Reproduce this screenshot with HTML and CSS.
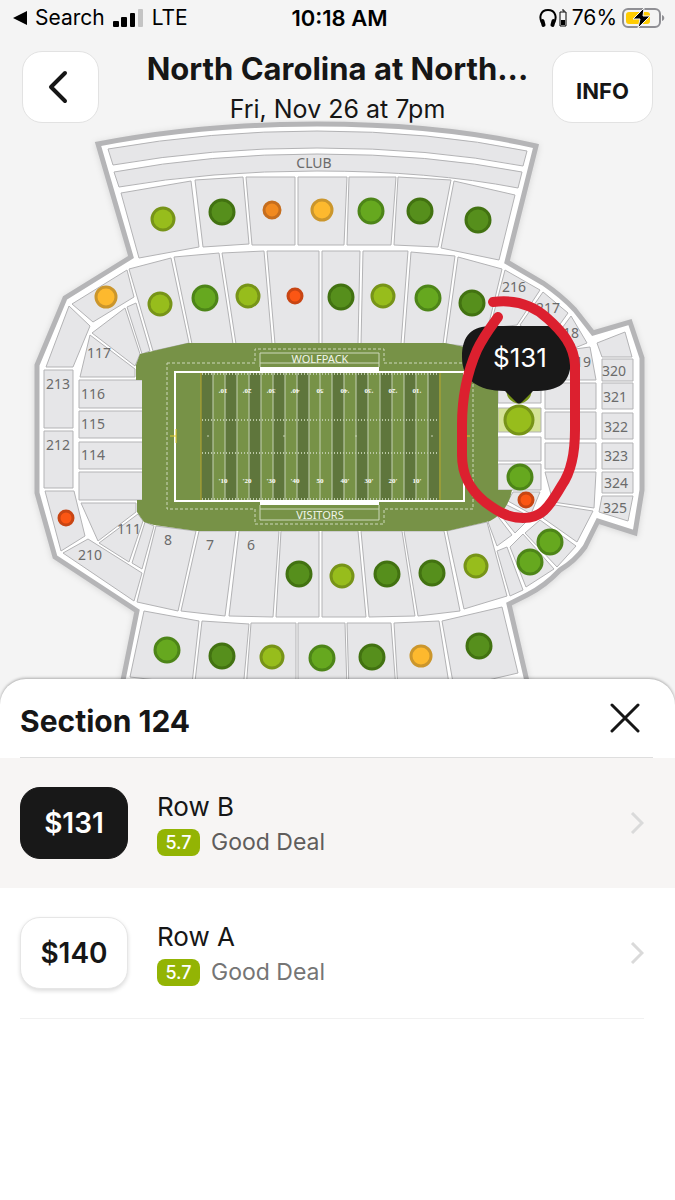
FILE: index.html
```html
<!DOCTYPE html>
<html lang="en">
<head>
    <meta charset="UTF-8">
    <meta name="viewport" content="width=device-width, initial-scale=1">
    <title>North Carolina at North Carolina State</title>
    <link rel="stylesheet" href="styles.css">
</head>
<body>
<div class="status-bar">
    <div class="status-left">
        <svg width="14" height="14" viewBox="0 0 14 14"><path d="M0 7 L14 0 V14 Z"/></svg>
        <span class="status-search">Search</span>
        <svg width="31" height="20" viewBox="0 0 31 20">
            <rect x="0" y="13" width="6" height="6" rx="1"/>
            <rect x="8" y="9" width="6" height="10" rx="1"/>
            <rect x="17" y="5" width="5" height="14" rx="1"/>
            <rect x="25" y="1" width="5" height="18" rx="1" fill="#c4c4c4"/>
        </svg>
        <span class="status-carrier">LTE</span>
    </div>
    <div class="status-time">10:18 AM</div>
    <div class="status-right">
        <svg width="28" height="20" viewBox="0 0 28 20">
            <path d="M3 15 C0 10 1 2 9 2 C17 2 18 10 15 15" fill="none" stroke="#000" stroke-width="2"/>
            <rect x="2" y="11" width="4" height="8" rx="2" transform="rotate(-15 4 15)"/>
            <rect x="12" y="11" width="4" height="8" rx="2" transform="rotate(15 14 15)"/>
            <path d="M21 4 H27 V18 H21 Z M23 2 H25 V4" fill="none" stroke="#000"/>
            <rect x="22" y="12" width="4" height="5"/>
        </svg>
        <span class="status-level">76%</span>
        <svg width="44" height="22" viewBox="0 0 44 22">
            <rect x="1" y="2" width="37" height="18" rx="5" fill="none" stroke="#8f8f94" stroke-width="2"/>
            <rect x="4" y="5" width="24" height="12" rx="3" fill="#ffcc02"/>
            <path d="M40 8 C43 9 43 13 40 14 Z" fill="#8f8f94"/>
            <path d="M22 1 L11 12 H18 L16 21 L28 9 H21 Z" fill="#000" stroke="#f4f4f4" stroke-width="1"/>
        </svg>
    </div>
</div>
<header class="header">
    <button class="nav-btn back-btn" type="button" aria-label="Back">
        <svg width="20" height="34" viewBox="0 0 20 34"><path d="M17 3 L3 17 L17 31" fill="none" stroke="#161616" stroke-width="4" stroke-linecap="round" stroke-linejoin="round"/></svg>
    </button>
    <div class="event">
        <h1>North Carolina at North...</h1>
        <p>Fri, Nov 26 at 7pm</p>
    </div>
    <button class="nav-btn info-btn" type="button">INFO</button>
</header>

<svg class="map" viewBox="0 120 675 580">
    <defs>
        <pattern id="stripes" x="201" y="372" width="24" height="130" patternUnits="userSpaceOnUse">
            <rect width="12" height="130" fill="#5f763c"/>
        </pattern>
    </defs>

    <!-- stadium outline -->
    <path class="outline" d="M98 144 Q200 124 317 124 Q440 124 536 146 L507 262 L543 283 Q562 296 575 310 L593 333 L630 322 L642 358 V490 L635 533 L598 521 L585 547 Q575 561 560 570 Q545 586 527 595 L509 604 L529 690 V710 H117 L137 611 L55 557 L37 493 V365 L65 298 L131 257 Z"/>

    <!-- club -->
    <g class="section">
        <path d="M108 149 Q210 131 317 131 Q430 131 527 151 L523 166 Q430 148 317 148 Q210 148 113 165 Z"/>
        <path d="M114 172 Q210 154 317 154 Q430 154 522 172 L518 188 Q430 171 317 171 Q210 171 119 187 Z"/>
    </g>

    <!-- upper rows, north side -->
    <g class="section">
        <path d="M121 193 L191 181 L199 247 L139 258 Z"/>
        <path d="M195 180 L243 177 L249 244 L203 247 Z"/>
        <path d="M246 177 H295 V245 H252 Z"/>
        <path d="M298 177 H347 L344 245 H298 Z"/>
        <path d="M349 177 H396 L391 245 H347 Z"/>
        <path d="M398 177 L451 180 L438 247 L394 245 Z"/>
        <path d="M454 181 L515 195 L499 260 L441 248 Z"/>
        <path d="M129 269 L171 258 L189 343 L153 351 Z"/>
        <path d="M174 257 L219 253 L233 344 H192 Z"/>
        <path d="M222 253 L264 251 L272 344 H236 Z"/>
        <path d="M267 251 H319 V344 H275 Z"/>
        <path d="M322 251 H360 L358 344 H322 Z"/>
        <path d="M363 251 H408 L401 344 H361 Z"/>
        <path d="M411 252 L455 256 L443 344 H404 Z"/>
        <path d="M458 257 L502 269 L483 348 L446 344 Z"/>
    </g>

    <!-- west end -->
    <g class="section">
        <path d="M72 304 L127 270 L134 297 L93 322 Z"/>
        <path d="M69 306 L90 326 L73 367 H46 Z"/>
        <path d="M92 333 L125 308 L140 354 L135 366 Z"/>
        <path d="M90 335 L135 369 V377 H80 Z"/>
        <path d="M127 307 L136 303 L150 351 L142 354 Z"/>
        <path d="M44 370 H73 V428 H44 Z"/>
        <path d="M44 431 H73 V488 H44 Z"/>
        <path d="M45 491 H74 L85 536 L61 551 Z"/>
        <path d="M63 553 L88 539 L142 573 L134 601 Z"/>
        <path d="M79 380 H143 V408 H79 Z"/>
        <path d="M79 411 H143 V438 H79 Z"/>
        <path d="M79 442 H143 V469 H79 Z"/>
        <path d="M79 472 H143 V500 H79 Z"/>
        <path d="M81 503 H136 V512 L98 541 Z"/>
        <path d="M99 543 L138 514 L143 521 L129 562 Z"/>
        <path d="M145 522 L154 526 L142 569 L132 563 Z"/>
    </g>

    <!-- rows, south side -->
    <g class="section">
        <path d="M156 526 L196 531 L178 611 L137 602 Z"/>
        <path d="M199 531 H236 L225 616 L181 611 Z"/>
        <path d="M239 531 H279 L273 617 L229 616 Z"/>
        <path d="M281 531 H319 V617 H276 Z"/>
        <path d="M322 531 H358 L366 617 H322 Z"/>
        <path d="M361 531 H402 L415 616 L369 617 Z"/>
        <path d="M404 531 H444 L460 611 L418 616 Z"/>
        <path d="M447 531 L487 522 L507 596 L464 609 Z"/>
        <path d="M144 611 L199 621 L192 684 L130 677 Z"/>
        <path d="M202 621 L249 624 L243 690 H194 Z"/>
        <path d="M251 623 H296 V690 H246 Z"/>
        <path d="M298 623 H345 L347 690 H298 Z"/>
        <path d="M347 623 H391 L396 690 H349 Z"/>
        <path d="M394 623 L439 621 L450 690 H398 Z"/>
        <path d="M442 621 L502 607 L518 673 L454 688 Z"/>
    </g>

    <!-- east end -->
    <g class="section">
        <path d="M505 270 L540 290 L517 325 L490 328 Z"/>
        <path d="M543 292 L568 313 L545 345 L520 325 Z"/>
        <path d="M571 316 L587 343 L565 352 L548 347 Z"/>
        <path d="M560 351 L590 347 L596 380 H545 Z"/>
        <path d="M545 383 H596 V409 H545 Z"/>
        <path d="M545 412 H596 V439 H545 Z"/>
        <path d="M545 443 H596 V469 H545 Z"/>
        <path d="M545 472 H596 L594 508 L553 502 Z"/>
        <path d="M555 505 L593 511 L577 542 L543 518 Z"/>
        <path d="M540 520 L576 546 L557 567 L525 533 Z"/>
        <path d="M523 534 L554 569 L526 587 L510 547 Z"/>
        <path d="M497 551 L507 547 L523 590 L510 596 Z"/>
        <path d="M498 370 H541 V403 H498 Z"/>
        <path class="picked" d="M498 408 H541 V432 H498 Z"/>
        <path d="M498 437 H541 V461 H498 Z"/>
        <path d="M498 464 H541 V490 H498 Z"/>
        <path d="M513 492 H540 L531 514 L508 501 Z"/>
        <path d="M505 504 L531 517 L515 533 L498 512 Z"/>
        <path d="M488 522 L496 514 L512 535 L497 546 Z"/>
        <path d="M597 343 L625 332 L632 357 H602 Z"/>
        <path d="M602 359 H633 V381 H602 Z"/>
        <path d="M602 383 H633 V409 H602 Z"/>
        <path d="M602 413 H633 V439 H602 Z"/>
        <path d="M602 443 H633 V469 H602 Z"/>
        <path d="M602 472 H633 V493 H602 Z"/>
        <path d="M602 496 H633 L628 521 L599 512 Z"/>
    </g>

    <!-- field -->
    <path fill="#779247" d="M188 343 H445 L480 350 L498 365 V490 H512 Q508 512 490 521 L447 531 H197 L154 525 L144 522 L137 512 V500 H142 V380 H136 V365 L140 354 Z"/>
    <path class="dotted" d="M167 363 H255 V349 H384 V363 H473 V509 H384 V524 H255 V509 H167 Z"/>
    <rect x="201" y="372" width="119" height="130" fill="url(#stripes)"/>
    <g fill="#5f763c">
        <rect x="332" y="372" width="12" height="130"/>
        <rect x="356" y="372" width="12" height="130"/>
        <rect x="380" y="372" width="12" height="130"/>
        <rect x="404" y="372" width="12" height="130"/>
        <rect x="428" y="372" width="11" height="130"/>
    </g>
    <path class="yards" d="M213 373V500 M225 373V500 M237 373V500 M249 373V500 M261 373V500 M273 373V500 M285 373V500 M297 373V500 M309 373V500 M320 373V500 M332 373V500 M344 373V500 M356 373V500 M368 373V500 M380 373V500 M392 373V500 M404 373V500 M416 373V500 M428 373V500"/>
    <path class="hashes" d="M202 374H439 M202 420H439 M202 453H439 M202 499H439"/>
    <path d="M201 373V500 M440 373V500" stroke="#b9a52c"/>
    <path d="M207 436H209 M283 436H285 M355 436H357 M431 436H433" stroke="#c9d3b5"/>
    <rect x="175" y="372" width="289" height="129" fill="none" stroke="#fff" stroke-width="2"/>
    <path d="M170 436H176 M176 429V443" stroke="#e3c92c"/>
    <path d="M466 436H470" stroke="#e3c92c"/>
    <rect x="260" y="367" width="119" height="5" fill="#fff"/>
    <rect x="260" y="500" width="119" height="5" fill="#fff"/>
    <path d="M260 367V353H379V367 M260 363H379 M260 505V520H379V505 M260 509H379" fill="none" stroke="#cdd8bb"/>
    <g class="team">
        <text x="320" y="363">WOLFPACK</text>
        <text x="320" y="519">VISITORS</text>
    </g>
    <g class="yard-no">
        <text x="223" y="483">'10</text>
        <text x="247" y="483">'20</text>
        <text x="271" y="483">'30</text>
        <text x="295" y="483">'40</text>
        <text x="320" y="483">50</text>
        <text x="345" y="483">40'</text>
        <text x="369" y="483">30'</text>
        <text x="393" y="483">20'</text>
        <text x="417" y="483">10'</text>
    </g>
    <g class="yard-no" transform="rotate(180 320 436)">
        <text x="223" y="483">'10</text>
        <text x="247" y="483">'20</text>
        <text x="271" y="483">'30</text>
        <text x="295" y="483">'40</text>
        <text x="320" y="483">50</text>
        <text x="345" y="483">40'</text>
        <text x="369" y="483">30'</text>
        <text x="393" y="483">20'</text>
        <text x="417" y="483">10'</text>
    </g>

    <!-- section numbers -->
    <g class="label">
        <text x="314" y="168">CLUB</text>
        <text x="514" y="292">216</text>
        <text x="548" y="313">217</text>
        <text x="567" y="338">218</text>
        <text x="579" y="367">219</text>
        <text x="614" y="376">320</text>
        <text x="615" y="402">321</text>
        <text x="616" y="432">322</text>
        <text x="616" y="461">323</text>
        <text x="616" y="488">324</text>
        <text x="615" y="513">325</text>
        <text x="99" y="358">117</text>
        <text x="93" y="399">116</text>
        <text x="93" y="429">115</text>
        <text x="93" y="460">114</text>
        <text x="129" y="534">111</text>
        <text x="58" y="389">213</text>
        <text x="58" y="450">212</text>
        <text x="90" y="560">210</text>
        <text x="168" y="545">8</text>
        <text x="210" y="550">7</text>
        <text x="251" y="550">6</text>
    </g>

    <!-- deal dots -->
    <g class="dot great">
        <circle cx="222" cy="212" r="12"/>
        <circle cx="420" cy="211" r="12"/>
        <circle cx="478" cy="220" r="12"/>
        <circle cx="341" cy="297" r="12"/>
        <circle cx="472" cy="303" r="12"/>
        <circle cx="299" cy="574" r="12"/>
        <circle cx="387" cy="574" r="12"/>
        <circle cx="432" cy="573" r="12"/>
        <circle cx="222" cy="656" r="12"/>
        <circle cx="372" cy="657" r="12"/>
        <circle cx="479" cy="646" r="12"/>
    </g>
    <g class="dot better">
        <circle cx="371" cy="211" r="12"/>
        <circle cx="205" cy="298" r="12"/>
        <circle cx="428" cy="298" r="12"/>
        <circle cx="520" cy="477" r="12"/>
        <circle cx="550" cy="542" r="12"/>
        <circle cx="530" cy="562" r="12"/>
        <circle cx="167" cy="650" r="12"/>
        <circle cx="322" cy="658" r="12"/>
    </g>
    <g class="dot good">
        <circle cx="163" cy="219" r="11"/>
        <circle cx="160" cy="304" r="11"/>
        <circle cx="248" cy="296" r="11"/>
        <circle cx="383" cy="296" r="11"/>
        <circle cx="519" cy="391" r="11"/>
        <circle cx="519" cy="420" r="14"/>
        <circle cx="476" cy="566" r="11"/>
        <circle cx="342" cy="576" r="11"/>
        <circle cx="272" cy="657" r="11"/>
    </g>
    <g class="dot fair">
        <circle cx="322" cy="210" r="10"/>
        <circle cx="106" cy="297" r="10"/>
        <circle cx="421" cy="656" r="10"/>
    </g>
    <g class="dot poor">
        <circle cx="272" cy="210" r="8"/>
    </g>
    <g class="dot bad">
        <circle cx="295" cy="296" r="7"/>
        <circle cx="66" cy="518" r="7"/>
        <circle cx="526" cy="500" r="7"/>
    </g>

    <!-- price bubble -->
    <path fill="#181818" d="M462 357 C462 335 472 326 492 326 H545 C562 326 569 335 571 357 C571 384 560 391 533 391 L522 402 Q519 405 516 402 L505 391 C478 391 462 380 462 357 Z"/>
    <text class="bubble-price" x="520" y="367">$131</text>

    <!-- marker circle -->
    <path class="marker" d="M493 302 C517 299 534 306 547 318 C563 332 574 346 575 365 V430 C575 455 571 472 562 485 C548 509 541 518 523 518 C508 518 497 511 485 502 C468 488 462 473 462 455 V425 C462 400 466 375 477 350 C483 337 490 328 498 317"/>
</svg>

<main class="sheet">
    <div class="sheet-head">
        <h2>Section 124</h2>
        <button class="close-btn" type="button" aria-label="Close">
            <svg width="30" height="30" viewBox="0 0 30 30"><path d="M2 2 L28 28 M28 2 L2 28" stroke="#161616" stroke-width="3" stroke-linecap="round"/></svg>
        </button>
    </div>
    <button class="listing selected" type="button">
        <span class="price">$131</span>
        <span class="details">
            <span class="row-name">Row B</span>
            <span class="deal"><span class="score">5.7</span>Good Deal</span>
        </span>
        <svg width="14" height="22" viewBox="0 0 14 22"><path d="M2 1 L12 11 L2 21" fill="none" stroke="#dadada" stroke-width="3"/></svg>
    </button>
    <button class="listing" type="button">
        <span class="price">$140</span>
        <span class="details">
            <span class="row-name">Row A</span>
            <span class="deal"><span class="score">5.7</span>Good Deal</span>
        </span>
        <svg width="14" height="22" viewBox="0 0 14 22"><path d="M2 1 L12 11 L2 21" fill="none" stroke="#dadada" stroke-width="3"/></svg>
    </button>
    <hr class="divider">
</main>
</body>
</html>
```
FILE: styles.css
```css
* { box-sizing: border-box; }
body { margin: 0; min-height: 100vh; display: flex; flex-direction: column; background: #f4f4f4; color: #161616; font-family: Inter, "Liberation Sans", sans-serif; }
button { margin: 0; padding: 0; border: none; background: none; color: inherit; font-family: inherit; cursor: pointer; }

/* status bar */
.status-bar { display: grid; grid-template-columns: 1fr auto 1fr; align-items: center; height: 36px; padding: 0 9px 0 13px; font-size: 21px; line-height: 36px; color: #000; }
.status-left, .status-right { display: flex; align-items: center; gap: 8px; }
.status-right { justify-content: flex-end; gap: 5px; }
.status-time { font-size: 22px; font-weight: 600; }

/* header */
.header { position: relative; z-index: 1; display: grid; grid-template-columns: 101px 1fr 101px; align-items: start; padding: 15px 22px 0; }
.nav-btn { display: flex; align-items: center; justify-content: center; height: 72px; background: #fff; border: 1px solid #e2e2e2; border-radius: 20px; }
.back-btn { width: 77px; padding-right: 6px; }
.info-btn { padding-top: 8px; font-size: 22px; font-weight: 700; }
.event { text-align: center; white-space: nowrap; }
.event h1 { margin: 0; font-size: 31px; line-height: 36px; font-weight: 700; }
.event p { margin: 6px 0 0; font-size: 25px; line-height: 32px; }

/* seat map */
.map { display: block; width: 100%; height: auto; margin-top: -5px; }
.outline { fill: #fff; stroke: #b5b5b7; stroke-width: 5; filter: drop-shadow(0 1px 3px rgba(0, 0, 0, 0.12)); }
.section { fill: #e6e6e8; stroke: #b3b3b5; stroke-width: 1; }
.picked { fill: #d5e396; }
.dotted { fill: none; stroke: #cdd8bb; stroke-dasharray: 3 2; }
.yards { stroke: #c5d1b3; stroke-width: 1; }
.hashes { stroke: #b9c7a3; stroke-width: 2; stroke-dasharray: 1 2; }
.team { font: 11px "Noto Sans", sans-serif; fill: #f1f5ea; text-anchor: middle; }
.yard-no { font: bold 7px "Liberation Serif", serif; fill: #fff; text-anchor: middle; }
.label { font: 14px "Noto Sans", sans-serif; fill: #6b6b6b; text-anchor: middle; }
.dot { stroke-width: 3; }
.great { fill: #568f1c; stroke: #427211; }
.better { fill: #66a81f; stroke: #4d8518; }
.good { fill: #97bd1c; stroke: #779418; }
.fair { fill: #fdb92e; stroke: #cb962c; }
.poor { fill: #f18a20; stroke: #c66e1e; }
.bad { fill: #fb5614; stroke: #c84513; }
.bubble-price { font: 26px Inter, sans-serif; fill: #fff; text-anchor: middle; }
.marker { fill: none; stroke: #dc202f; stroke-width: 10; stroke-linecap: round; }

/* bottom sheet */
.sheet { position: relative; flex: 1; margin-top: -21px; background: #fff; border-radius: 26px 26px 0 0; box-shadow: 0 -1px 3px rgba(0, 0, 0, 0.3); }
.sheet-head { display: flex; align-items: center; justify-content: space-between; height: 79px; margin: 0 22px 0 20px; padding-right: 13px; border-bottom: 1px solid #dedede; }
.sheet-head h2 { margin: 0; padding-top: 6px; font-size: 30px; line-height: 36px; font-weight: 700; }
.close-btn { display: flex; }
.listing { display: flex; align-items: center; width: 100%; height: 130px; padding: 0 31px 0 20px; text-align: left; }
.selected { background: #f7f5f4; }
.price { display: flex; align-items: center; justify-content: center; width: 108px; height: 72px; border: 1px solid #e6e6e6; border-radius: 20px; background: #fff; box-shadow: 0 2px 4px rgba(0, 0, 0, 0.14); font-size: 28px; font-weight: 600; }
.selected .price { background: #181818; border-color: #181818; box-shadow: none; color: #fff; }
.details { flex: 1; margin-left: 29px; padding-top: 2px; }
.row-name { display: block; font-size: 26px; line-height: 36px; }
.deal { display: flex; align-items: center; gap: 11px; font-size: 23px; line-height: 34px; color: #757575; }
.selected .deal { color: #5f5d5c; }
.score { width: 43px; border-radius: 8px; background: #93b404; color: #fff; font-size: 18px; line-height: 27px; font-weight: 500; text-align: center; }
.divider { height: 1px; margin: 0 31px 0 20px; border: none; background: #f1f1f1; }
```
